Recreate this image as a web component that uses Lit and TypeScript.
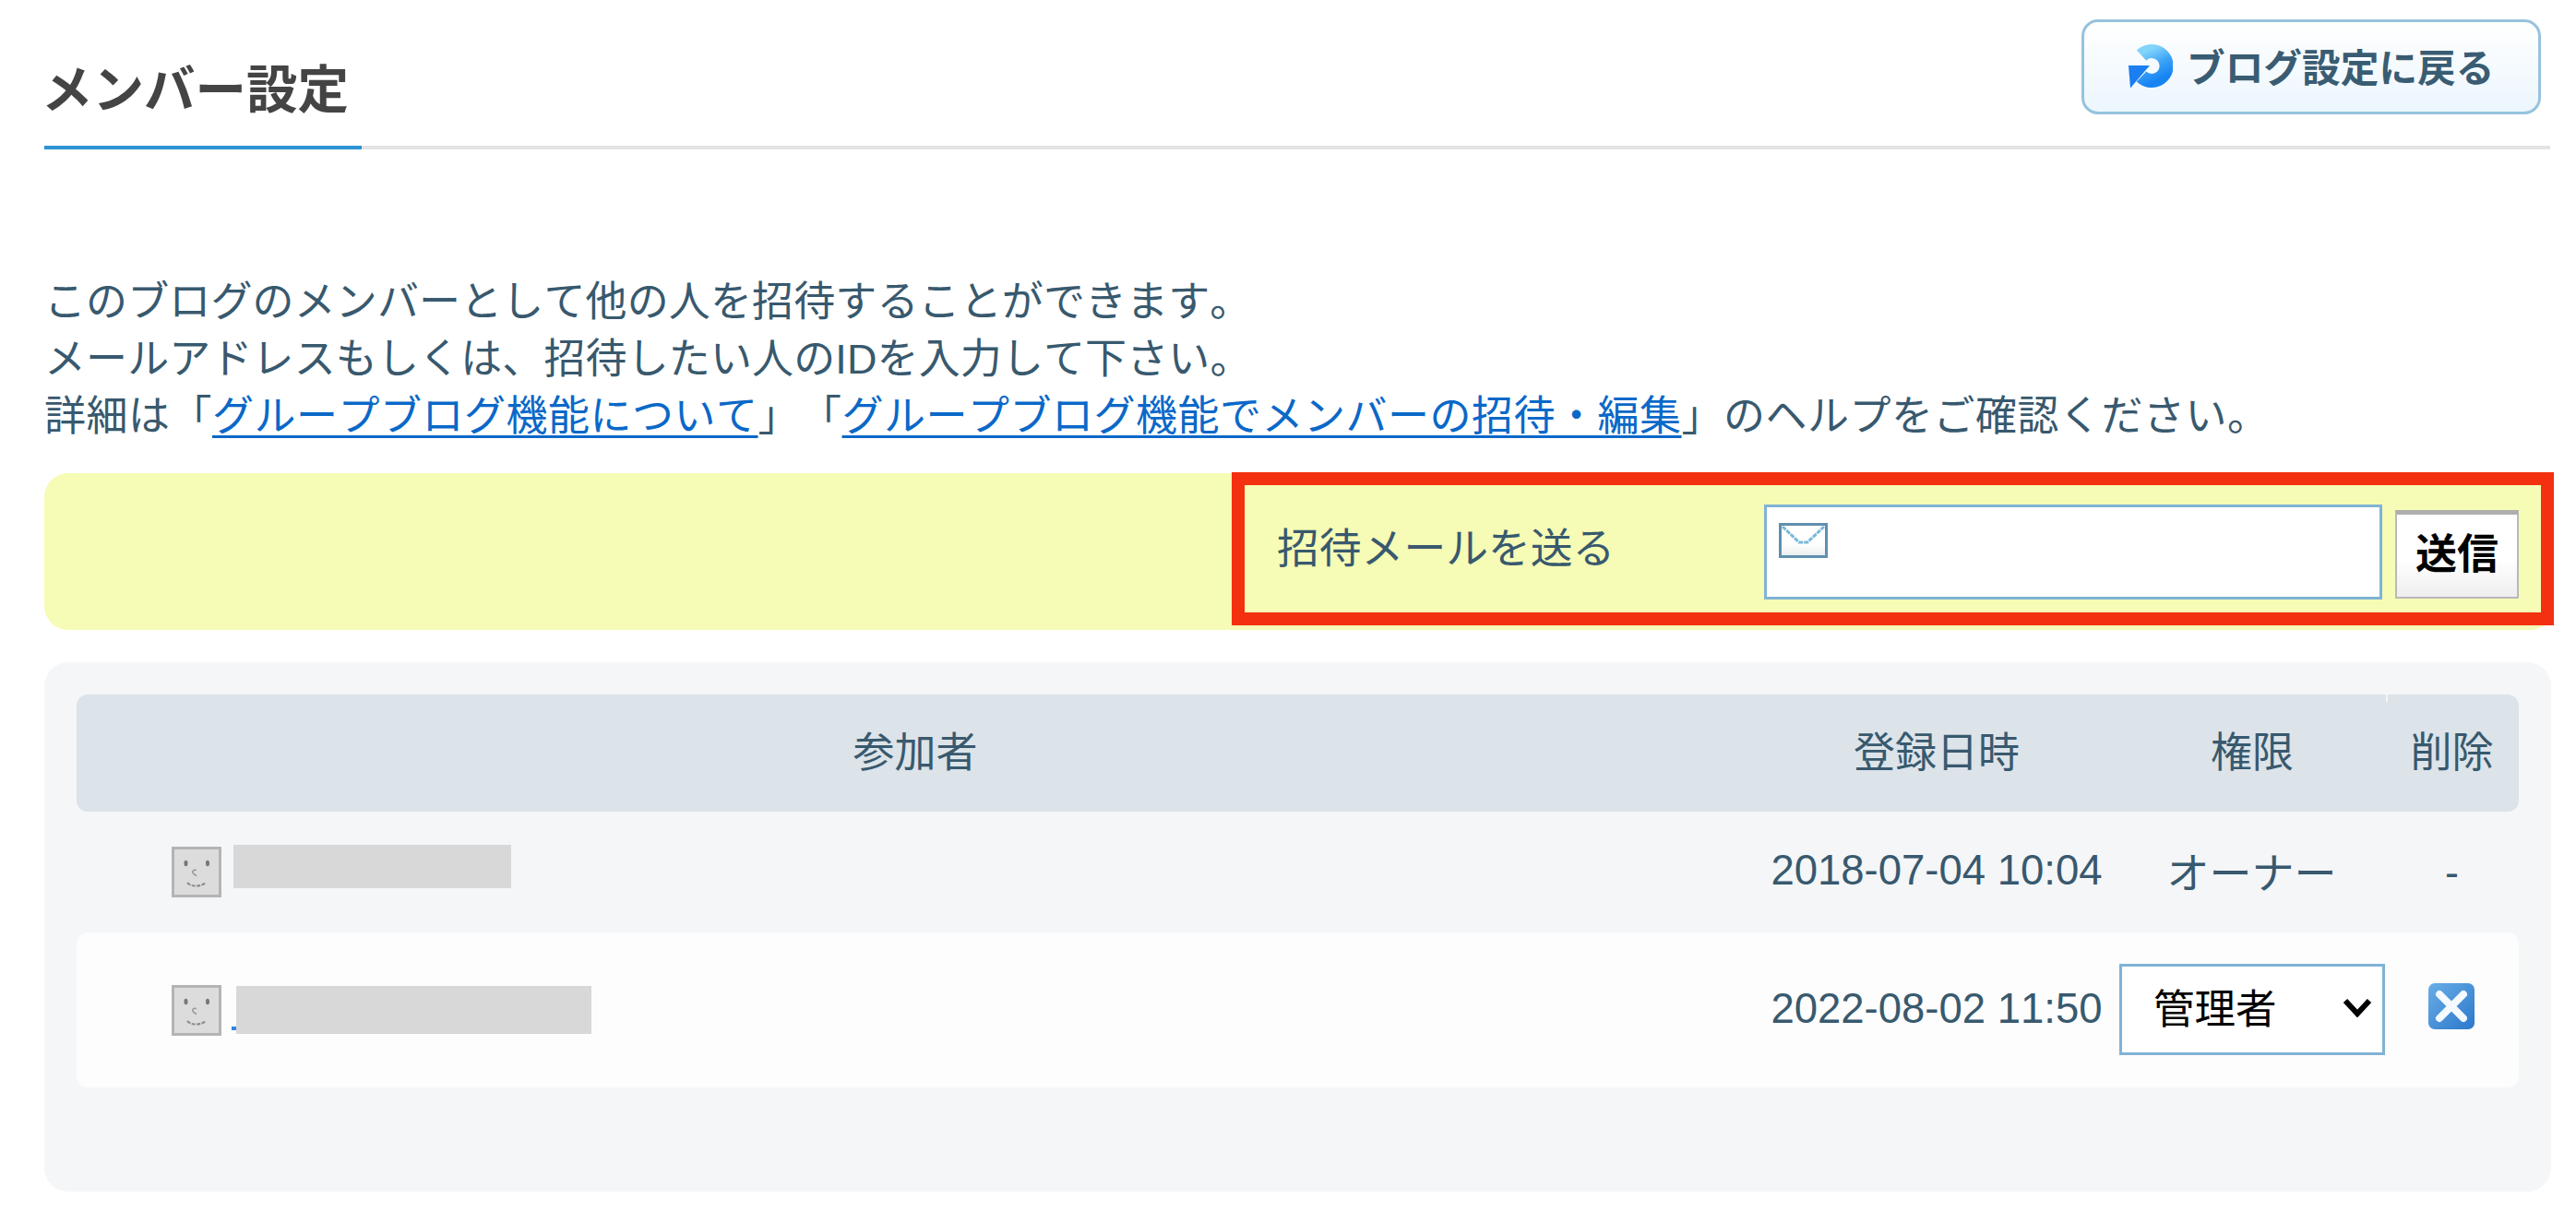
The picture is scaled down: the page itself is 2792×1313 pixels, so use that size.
import { LitElement, html, css } from "lit";
import { customElement } from "lit/decorators.js";

const face = html`<svg class="face" viewBox="0 0 54 55" aria-hidden="true">
  <rect x="1.5" y="1.5" width="51" height="52" fill="#dcdcdc" stroke="#b4b4b4" stroke-width="3"/>
  <ellipse cx="15.5" cy="18" rx="2" ry="3.2" fill="#777"/>
  <ellipse cx="39" cy="18" rx="2" ry="3.2" fill="#777"/>
  <path d="M27 25.5c-3-1-5 1-4 3 .8 1.6 3 1.6 3.6 3.4" fill="none" stroke="#999" stroke-width="1.6"/>
  <path d="M17 39c3 3 7 3.800 10.500 3.600 4-.2 7-1.600 9.500-3.600" fill="none" stroke="#8a8a8a" stroke-width="2" stroke-dasharray="4 1.500"/>
</svg>`;

@customElement("app-root")
export class AppRoot extends LitElement {
  static styles = css`
    :host {
      display: block;
      width: 2792px;
      height: 1313px;
      overflow: hidden;
      background: #fff;
      color: #38596e;
      font-family: "Liberation Sans", "Noto Sans CJK JP", sans-serif;
      font-size: 45px;
      font-kerning: none;
      text-spacing-trim: space-all;
    }
    .head {
      display: flex;
      justify-content: space-between;
      height: 158px;
      margin: 0 28px 0 48px;
      border-bottom: 4px solid #e2e3e4;
    }
    h1 {
      align-self: flex-end;
      box-sizing: border-box;
      width: 344px;
      height: 104px;
      margin: 0 0 -4px;
      border-bottom: 4px solid #2b94d3;
      color: #444;
      font-size: 55.5px;
      font-weight: 700;
      line-height: 80px;
      text-indent: -3px;
      white-space: nowrap;
    }
    .back {
      display: flex;
      align-items: center;
      box-sizing: border-box;
      width: 498px;
      height: 103px;
      margin: 21px 10px 0 0;
      padding: 0 0 3px 48px;
      gap: 15px;
      border: 3px solid #97c3dd;
      border-radius: 18px;
      background: linear-gradient(#fff, #ecf6fe);
      color: #3a5c72;
      font-size: 41.7px;
      font-weight: 700;
      text-decoration: none;
      white-space: nowrap;
    }
    .back svg {
      flex: none;
      width: 48px;
      height: 49px;
    }
    .intro {
      margin: 135px 0 30px 48px;
      line-height: 62px;
      letter-spacing: 0.12px;
      white-space: nowrap;
    }
    .wide {
      letter-spacing: 0.5px;
    }
    .intro a {
      color: #0a68c8;
      text-decoration: underline;
      text-decoration-thickness: 3px;
      text-underline-offset: 5px;
    }
    .invite {
      position: relative;
      display: flex;
      align-items: center;
      box-sizing: border-box;
      width: 2720px;
      height: 170px;
      margin-left: 48px;
      padding-left: 1336px;
      border-radius: 26px;
      background: #f6fbb5;
    }
    .invite label {
      flex: none;
      width: 528px;
      margin-top: -5px;
      font-size: 45.8px;
      line-height: 62px;
    }
    .field {
      display: flex;
      align-items: flex-start;
      flex: none;
      box-sizing: border-box;
      width: 670px;
      height: 103px;
      padding: 17px 13px;
      gap: 10px;
      border: 3px solid #7fb3d5;
      background: #fff;
    }
    .field svg {
      flex: none;
      width: 53px;
      height: 38px;
    }
    .field input {
      flex: 1;
      min-width: 0;
      padding: 0;
      border: 0;
      outline: 0;
      background: transparent;
      font: inherit;
    }
    .send {
      flex: none;
      box-sizing: border-box;
      width: 134px;
      height: 96px;
      margin: 5px 0 0 14px;
      padding: 0 0 10px;
      border: 2px solid #b9b9b9;
      border-top: 5px solid #aeaeae;
      background: linear-gradient(#fff 55%, #eee);
      color: #000;
      font: 700 45px "Liberation Sans", "Noto Sans CJK JP", sans-serif;
    }
    .mark {
      position: absolute;
      top: -1px;
      left: 1287px;
      box-sizing: border-box;
      width: 1433px;
      height: 166px;
      border: 14px solid #f3300f;
      pointer-events: none;
    }
    .panel {
      box-sizing: border-box;
      width: 2717px;
      height: 574px;
      margin: 35px 0 0 48px;
      padding: 35px 35px 0;
      border-radius: 26px;
      background: #f4f6f8;
    }
    .row {
      display: grid;
      grid-template-columns: 1818px 396px 288px 145px;
      align-items: center;
      justify-items: center;
      border-radius: 12px;
    }
    .th {
      position: relative;
      height: 127px;
      background: #dce3e9;
      line-height: 128px;
    }
    .th::after {
      content: "";
      position: absolute;
      top: 0;
      left: 2503px;
      width: 2px;
      height: 8px;
      background: #f4f6f8;
    }
    .r1 {
      height: 131px;
    }
    .r2 {
      height: 168px;
      background: #fdfdfd;
    }
    .who {
      display: flex;
      align-items: flex-start;
      justify-self: start;
      padding-left: 103px;
    }
    .face {
      display: block;
      flex: none;
      width: 54px;
      height: 55px;
    }
    .blur {
      display: block;
      background: #d8d8d8;
    }
    .r1 .blur {
      width: 301px;
      height: 47px;
      margin: -2px 0 0 13px;
    }
    .r2 .blur {
      position: relative;
      width: 385px;
      height: 52px;
      margin: 1px 0 0 16px;
    }
    .r2 .blur::before {
      content: "";
      position: absolute;
      left: -5px;
      top: 44px;
      width: 5px;
      height: 4px;
      background: #2f86e0;
    }
    .date {
      margin-top: -3px;
      font-size: 45.5px;
      white-space: nowrap;
    }
    .role {
      margin: -6px 0 0 -1px;
      font-size: 46px;
    }
    .sel {
      position: relative;
      width: 288px;
      height: 99px;
      margin-top: -1px;
    }
    .sel select {
      display: block;
      box-sizing: border-box;
      width: 100%;
      height: 100%;
      padding: 0 0 0 34px;
      border: 3px solid #7fb3d5;
      border-radius: 0;
      outline: 0;
      background: #fff;
      color: #000;
      font: 44.5px "Liberation Sans", "Noto Sans CJK JP", sans-serif;
      appearance: none;
    }
    .sel svg {
      position: absolute;
      top: 37px;
      left: 242px;
      width: 32px;
      height: 21px;
      pointer-events: none;
    }
    .del {
      display: block;
      width: 52px;
      height: 52px;
      margin: -9px 2px 0 0;
    }
  `;

  render() {
    return html`<div lang="ja">
      <header class="head">
        <h1>メンバー設定</h1>
        <a class="back" href="#">
          <svg viewBox="0 0 48 49" aria-hidden="true">
            <defs>
              <linearGradient id="arc" x1="0.2" y1="0" x2="0.6" y2="1">
                <stop offset="0" stop-color="#82d4fb" />
                <stop offset="0.5" stop-color="#3da4f8" />
                <stop offset="1" stop-color="#1784f2" />
              </linearGradient>
            </defs>
            <path d="M14 13A16 16 0 1 1 14 36" fill="none" stroke="url(#arc)" stroke-width="15" />
            <path d="M0 24H23L2 48.500Z" fill="#1a7ff0" />
          </svg>
          <span>ブログ設定に戻る</span>
        </a>
      </header>

      <p class="intro">
        このブログのメンバーとして他の人を招待することができます。<br />
        メールアドレスもしくは、招待したい人のIDを入力して下さい。<br />
        <span class="wide">詳細は「<a href="#">グループブログ機能について</a>」「<a href="#">グループブログ機能でメンバーの招待・編集</a>」のヘルプをご確認ください。</span>
      </p>

      <form class="invite">
        <label for="mail">招待メールを送る</label>
        <div class="field">
          <svg viewBox="0 0 53 38" aria-hidden="true">
            <defs>
              <linearGradient id="env" x1="0" y1="0" x2="0" y2="1">
                <stop offset="0.6" stop-color="#fff" />
                <stop offset="1" stop-color="#e9ecee" />
              </linearGradient>
            </defs>
            <rect x="1.500" y="1.500" width="50" height="35" fill="url(#env)" stroke="#5f8fae" stroke-width="3" />
            <path d="M4 4l18 17h9L49 4" fill="none" stroke="#7bb8d9" stroke-width="3" stroke-dasharray="5 1" />
          </svg>
          <input id="mail" type="text" />
        </div>
        <button class="send" type="button">送信</button>
        <div class="mark"></div>
      </form>

      <section class="panel">
        <div class="row th">
          <span>参加者</span><span>登録日時</span><span>権限</span><span>削除</span>
        </div>
        <div class="row r1">
          <div class="who">${face}<span class="blur"></span></div>
          <span class="date">2018-07-04 10:04</span>
          <span class="role">オーナー</span>
          <span class="dash">-</span>
        </div>
        <div class="row r2">
          <div class="who">${face}<span class="blur"></span></div>
          <span class="date">2022-08-02 11:50</span>
          <div class="sel">
            <select><option>管理者</option></select>
            <svg viewBox="0 0 32 21" aria-hidden="true">
              <path d="M3 3l13 14L29 3" fill="none" stroke="#000" stroke-width="6" />
            </svg>
          </div>
          <svg class="del" viewBox="0 0 52 52" aria-label="削除">
            <defs>
              <linearGradient id="xb" x1="0" y1="0" x2="1" y2="1">
                <stop offset="0" stop-color="#6aaee6" />
                <stop offset="1" stop-color="#2b78cc" />
              </linearGradient>
            </defs>
            <rect x="1" y="1" width="50" height="50" rx="7" fill="url(#xb)" />
            <path d="M13 13l26 26M39 13L13 39" stroke="#f4faff" stroke-width="8" stroke-linecap="round" />
          </svg>
        </div>
      </section>
    </div>`;
  }
}
